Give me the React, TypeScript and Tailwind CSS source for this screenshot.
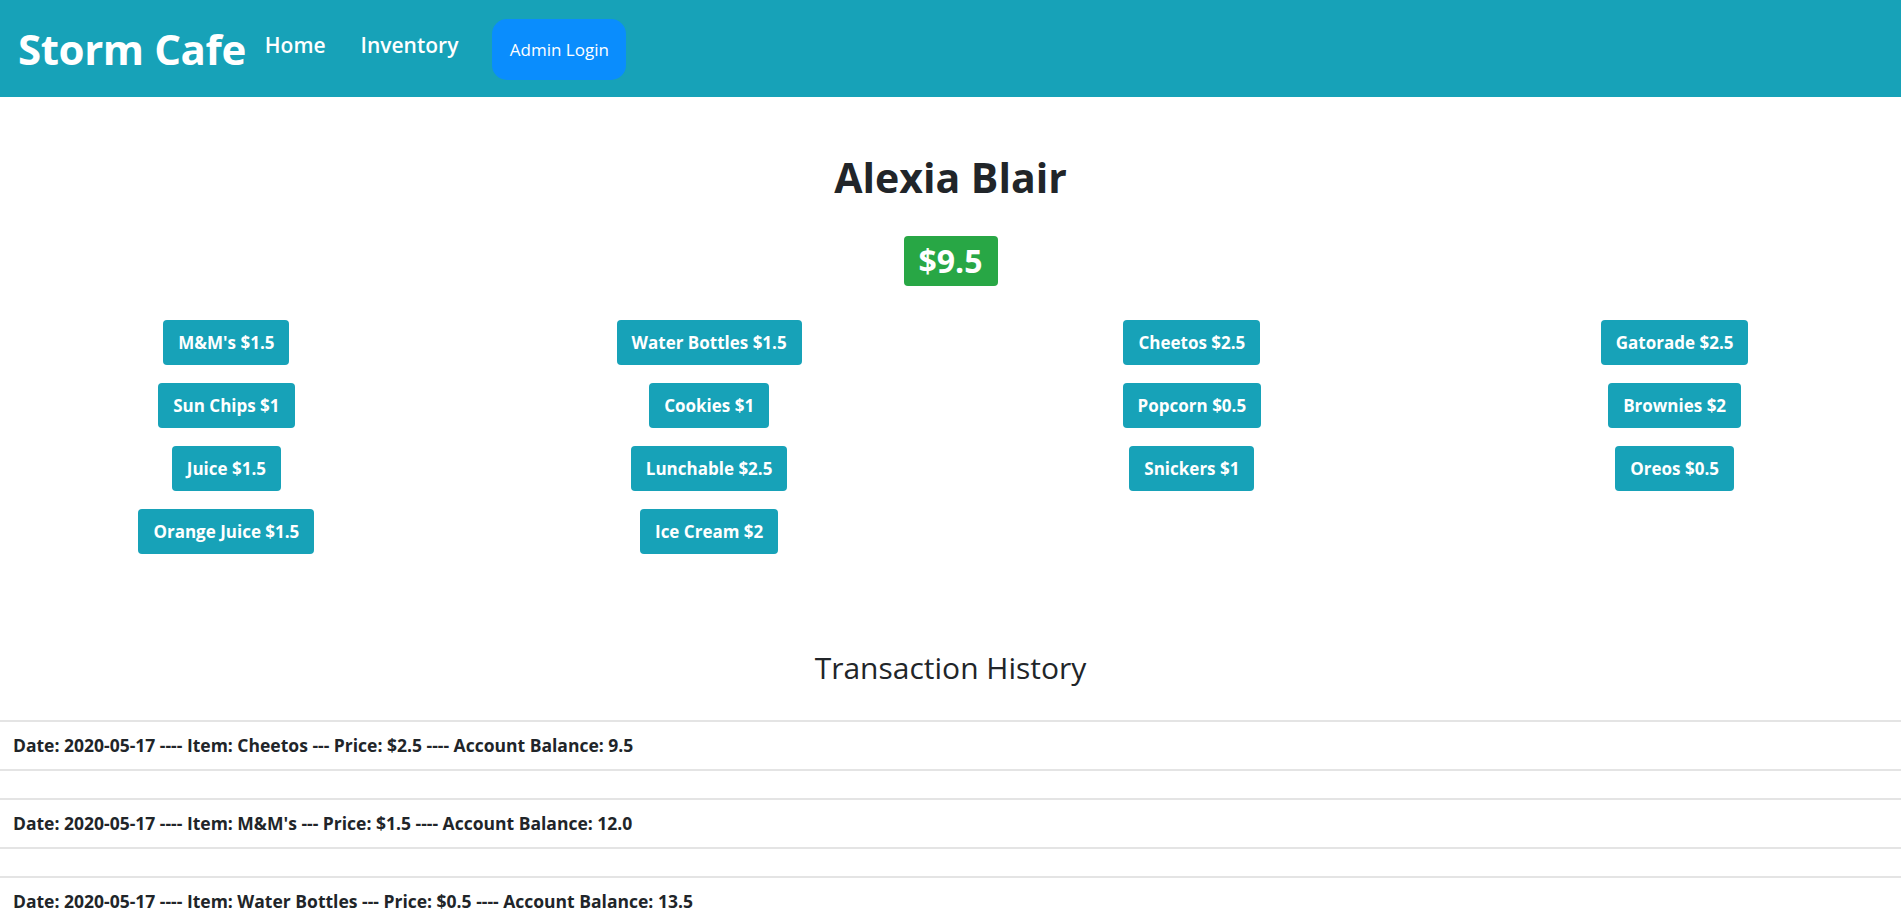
import React from "react";

const items: string[][] = [
  ["M&M's $1.5", "Sun Chips $1", "Juice $1.5", "Orange Juice $1.5"],
  ["Water Bottles $1.5", "Cookies $1", "Lunchable $2.5", "Ice Cream $2"],
  ["Cheetos $2.5", "Popcorn $0.5", "Snickers $1"],
  ["Gatorade $2.5", "Brownies $2", "Oreos $0.5"],
];

const history = [
  "Date: 2020-05-17 ---- Item: Cheetos --- Price: $2.5 ---- Account Balance: 9.5",
  "Date: 2020-05-17 ---- Item: M&M's --- Price: $1.5 ---- Account Balance: 12.0",
  "Date: 2020-05-17 ---- Item: Water Bottles --- Price: $0.5 ---- Account Balance: 13.5",
];

export default function App() {
  return (
    <div className="min-h-screen bg-white text-[#212529] font-['Open_Sans',sans-serif] overflow-hidden">
      <nav className="h-[97px] bg-[#17a2b8] flex items-center pl-[18px]">
        <span className="text-[42px] font-bold text-white tracking-[-0.4px] leading-none">Storm Cafe</span>
        <a className="ml-[19px] mb-[5px] text-[21px] font-semibold text-white">Home</a>
        <a className="ml-[35px] mb-[5px] text-[21px] font-semibold text-white">Inventory</a>
        <button className="ml-[34px] mt-[2px] w-[134px] h-[61px] rounded-[15px] bg-[#0a8dfd] text-white text-[17px]">
          Admin Login
        </button>
      </nav>

      <h1 className="mt-[56px] text-center text-[41px] font-bold leading-[48px]">Alexia Blair</h1>
      <div className="mt-[35px] flex justify-center">
        <span className="h-[50px] w-[94px] text-center rounded-[4px] bg-[#28a745] text-white text-[32px] font-bold leading-[50px]">
          $9.5
        </span>
      </div>

      <div className="mt-[34px] mx-[-15px] grid grid-cols-4">
        {items.map((col, i) => (
          <div key={i} className="flex flex-col items-center gap-[18px]">
            {col.map((it) => (
              <button
                key={it}
                className="h-[45px] px-[15px] rounded-[4px] bg-[#17a2b8] text-white text-[17px] font-bold"
              >
                {it}
              </button>
            ))}
          </div>
        ))}
      </div>

      <h2 className="mt-[94px] text-center text-[30px] font-medium leading-[40px]">Transaction History</h2>

      <div className="mt-[32px] flex flex-col gap-[27px]">
        {history.map((h) => (
          <div
            key={h}
            className="border-y-2 border-[#e4e4e4] px-[13px] h-[51px] flex items-center text-[17.5px] font-bold"
          >
            {h}
          </div>
        ))}
      </div>
    </div>
  );
}
